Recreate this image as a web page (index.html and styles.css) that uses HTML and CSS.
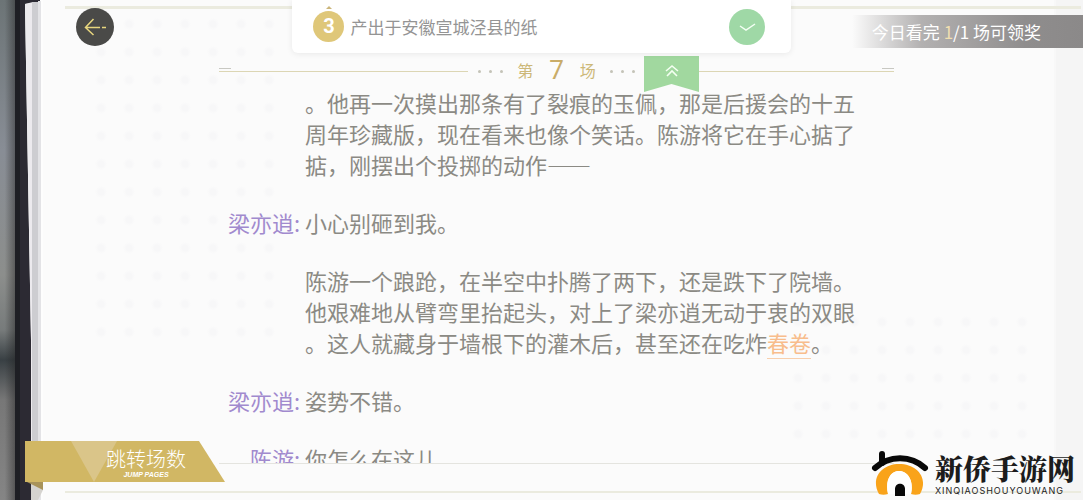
FILE: index.html
```
<!DOCTYPE html>
<html lang="zh-CN">
<head>
    <meta charset="UTF-8">
    <meta name="viewport" content="width=device-width, initial-scale=1.0">
    <title>第 7 场</title>
    <link rel="stylesheet" href="styles.css">
</head>
<body>
    <div class="book">
        <!-- Book cover and page edges -->
        <div class="spine">
            <svg width="100%" height="100%" viewBox="0 0 43 500" preserveAspectRatio="none" aria-hidden="true">
                <defs>
                    <linearGradient id="desk" x1="0" y1="0" x2="0" y2="1">
                        <stop offset="0" stop-color="#6c7476"/>
                        <stop offset="0.3" stop-color="#888d95"/>
                        <stop offset="0.55" stop-color="#8c8e8c"/>
                        <stop offset="0.66" stop-color="#777b7b"/>
                        <stop offset="0.72" stop-color="#394044"/>
                        <stop offset="0.8" stop-color="#777"/>
                        <stop offset="1" stop-color="#858585"/>
                    </linearGradient>
                    <linearGradient id="shade" x1="0" y1="0" x2="1" y2="0">
                        <stop offset="0.3" stop-color="#222" stop-opacity="0"/>
                        <stop offset="1" stop-color="#222" stop-opacity="0.5"/>
                    </linearGradient>
                </defs>
                <rect width="43" height="500" fill="#fdfdfd"/>
                <rect width="16" height="500" fill="url(#desk)"/>
                <rect width="16" height="500" fill="url(#shade)"/>
                <path d="M15 0H40V2L25 4L27 120L31 340V500H15Z" fill="#2c2a33"/>
                <path d="M15 0H20V500H15Z" fill="#1e1f24"/>
                <path d="M25 4L33 2V500H31V340L27 120Z" fill="#eceaee"/>
                <path d="M32 2H38V500H32Z" fill="#cdcdd1"/>
                <path d="M38 1H41V500H38Z" fill="#e3e3e6"/>
                <path d="M31 482H43V490L38 500H31Z" fill="#d5d3cf"/>
                <path d="M27 482H43V490Z" fill="#a8935a"/>
            </svg>
        </div>

        <main class="page">
            <div class="dots dots-left"></div>
            <div class="dots dots-right"></div>

            <section class="reader">
                <header class="scene">
                    <span class="line line-left"></span>
                    <span class="dot-row"><i></i><i></i><i></i></span>
                    <h1><span>第</span><em>7</em><span>场</span></h1>
                    <span class="dot-row"><i></i><i></i><i></i></span>
                    <span class="line line-right"></span>
                    <button class="bookmark" type="button" aria-label="收起">
                        <svg width="18" height="18" viewBox="0 0 18 18"><path d="M3 9L9 4L15 9M4 14L9 9L14 14" fill="none" stroke="#f4fff2" stroke-width="1.6"/></svg>
                    </button>
                </header>

                <div class="script">
                    <div class="entry">
                        <p>。他再一次摸出那条有了裂痕的玉佩，那是后援会的十五<br>周年珍藏版，现在看来也像个笑话。陈游将它在手心掂了<br>掂，刚摆出个投掷的动作——</p>
                    </div>
                    <div class="entry">
                        <span class="name">梁亦逍:</span>
                        <p>小心别砸到我。</p>
                    </div>
                    <div class="entry">
                        <p>陈游一个踉跄，在半空中扑腾了两下，还是跌下了院墙。<br>他艰难地从臂弯里抬起头，对上了梁亦逍无动于衷的双眼<br>。这人就藏身于墙根下的灌木后，甚至还在吃炸<a class="keyword" href="#">春卷</a>。</p>
                    </div>
                    <div class="entry">
                        <span class="name">梁亦逍:</span>
                        <p>姿势不错。</p>
                    </div>
                    <div class="entry">
                        <span class="name">陈游:</span>
                        <p>你怎么在这儿</p>
                    </div>
                </div>
            </section>
        </main>
    </div>

    <button class="back" type="button" aria-label="返回">
        <svg width="38" height="38" viewBox="0 0 38 38"><path d="M17.500 11L9.500 19.500L17.500 27M9.500 19.500H24M26 19.500H30" fill="none" stroke="#e8d67e" stroke-width="1.5"/></svg>
    </button>

    <div class="task">
        <span class="task-number">3</span>
        <span class="task-text">产出于安徽宣城泾县的纸</span>
        <button class="task-check" type="button" aria-label="完成">
            <svg width="36" height="36" viewBox="0 0 36 36"><path d="M11 17L17 21L26 15" fill="none" stroke="#f4fff4" stroke-width="1.5"/></svg>
        </button>
    </div>

    <div class="reward">今日看完 <b>1</b>/1 场可领奖</div>

    <button class="jump" type="button">
        <span class="jump-title">跳转场数</span>
        <span class="jump-sub">JUMP PAGES</span>
    </button>

    <!-- Site watermark -->
    <div class="watermark">
        <svg width="58" height="46" viewBox="0 0 58 46" aria-hidden="true">
            <path d="M8 43C-1 27 11 13 28 13C46 13 58 27 49 43C46 44 43 44 40 43C43 30 37 20 28 20C19 20 14 30 17 43C14 44 11 44 8 43Z" fill="#f9a31a"/>
            <path d="M17 43C14 30 19 20 28 20C37 20 43 30 40 43Z" fill="#fff"/>
            <path d="M24 45V38C24 31 34 31 34 38V45Z" fill="#080808"/>
            <path d="M4 17C18 4 40 4 54 17" fill="none" stroke="#080808" stroke-width="6" stroke-linecap="round"/>
            <path d="M11 3V12" stroke="#080808" stroke-width="6" stroke-linecap="round"/>
        </svg>
        <div class="watermark-text">
            <strong>新侨手游网</strong>
            <small>XINQIAOSHOUYOUWANG</small>
        </div>
    </div>
</body>
</html>
```
FILE: styles.css
```
* {
    box-sizing: border-box;
}

body {
    margin: 0;
    font-family: "Noto Sans CJK SC", "Noto Sans", sans-serif;
    color: #8b8a84;
    background-color: #f5f5f5;
    overflow: hidden;
}

button {
    border: none;
    padding: 0;
    font-family: inherit;
    cursor: pointer;
}

.book {
    display: flex;
    height: 100vh;
    padding-right: 27px;
}

.spine {
    width: 43px;
    flex-shrink: 0;
}

.spine svg {
    display: block;
}

/* Page */
.page {
    position: relative;
    flex: 1;
    display: flex;
    padding: 56px 160px 36px 176px;
    background-color: #fbfbfb;
    border-right: 2px solid #f8f8f8;
}

.page::before,
.page::after {
    content: "";
    position: absolute;
    left: 22px;
    right: -27px;
    height: 3px;
    background-color: #ebebdf;
}

.page::before {
    top: 6px;
}

.page::after {
    bottom: 7px;
    height: 2px;
}

.dots {
    position: absolute;
    background-image: radial-gradient(circle, #f7f7f8 3px, transparent 6px);
    background-size: 28px 28px;
}

.dots-left {
    top: 10px;
    left: 44px;
    width: 196px;
    height: 336px;
}

.dots-right {
    right: 18px;
    bottom: 52px;
    width: 252px;
    height: 140px;
}

.reader {
    position: relative;
    flex: 1;
    display: flex;
    flex-direction: column;
    min-width: 0;
    border-bottom: 1px solid #e4e4df;
}

/* Scene heading */
.scene {
    position: relative;
    display: flex;
    align-items: center;
    gap: 10px;
    height: 30px;
    flex-shrink: 0;
}

.scene h1 {
    display: flex;
    align-items: center;
    gap: 16px;
    margin: 0 4px;
    font-size: 16px;
    font-weight: 400;
    line-height: 26px;
    padding-bottom: 2px;
    color: #cdb878;
}

.scene em {
    font-family: Roboto, sans-serif;
    font-size: 26px;
    font-style: normal;
    color: #c9ac68;
}

.line {
    position: relative;
    flex: 1;
    height: 1px;
    background-color: #dcd6b4;
}

.line::before {
    content: "";
    position: absolute;
    top: -3px;
    width: 12px;
    height: 1px;
    background-color: #c8c8c2;
}

.line-left::before {
    left: 0;
}

.line-right::before {
    right: 0;
}

.dot-row {
    display: flex;
    gap: 8px;
}

.dot-row i {
    width: 3px;
    height: 3px;
    border-radius: 50%;
    background-color: #c4c3b8;
}

.bookmark {
    position: absolute;
    top: 0;
    right: 195px;
    width: 55px;
    height: 36px;
    background-color: #a1d89f;
    clip-path: polygon(0 0, 100% 0, 100% 100%, 50% 78%, 0 100%);
}

.bookmark svg {
    display: block;
    margin: 0 auto 6px;
}

/* Script text */
.script {
    flex: 1;
    display: flex;
    flex-direction: column;
    gap: 27px;
    min-height: 0;
    padding-top: 1px;
    overflow: hidden;
    font-size: 22px;
    line-height: 31px;
}

.entry {
    display: grid;
    grid-template-columns: 81px 1fr;
    column-gap: 5px;
    white-space: nowrap;
}

.entry p {
    grid-column: 2;
    margin: 0;
}

.name {
    text-align: right;
    color: #a18ace;
}

.keyword {
    color: #f8bd8c;
    text-decoration: none;
    border-bottom: 1px solid #f8cfac;
}

/* Overlays */
.back {
    position: absolute;
    top: 8px;
    left: 76px;
    width: 38px;
    height: 38px;
    border-radius: 50%;
    background-color: #4a4a48;
}

.back svg,
.task-check svg {
    display: block;
}

.task {
    position: absolute;
    top: 0;
    left: 27%;
    right: 27%;
    display: flex;
    align-items: center;
    gap: 6px;
    height: 53px;
    padding: 0 26px 0 21px;
    border-radius: 0 0 6px 6px;
    background-color: #fff;
    box-shadow: 0 1px 6px rgba(0, 0, 0, 0.08);
}

.task-number {
    position: relative;
    width: 31px;
    height: 31px;
    border-radius: 50%;
    background-color: #dfc779;
    color: #fff;
    font-family: Roboto, sans-serif;
    font-size: 20px;
    font-weight: 700;
    line-height: 31px;
    text-align: center;
}

.task-number::before {
    content: "";
    position: absolute;
    top: -5px;
    left: 13px;
    border: 3px solid transparent;
    border-top: none;
    border-bottom-color: #cbb57a;
}

.task-text {
    flex: 1;
    font-size: 17px;
    line-height: 24px;
    color: #949494;
}

.task-check {
    width: 36px;
    height: 36px;
    border-radius: 50%;
    background-color: #9fd8a6;
}

.reward {
    position: absolute;
    top: 15px;
    right: 0;
    padding: 0 42px 0 20px;
    font-size: 17px;
    line-height: 33px;
    color: #fff;
    background: linear-gradient(to right, rgba(130, 128, 128, 0), #b3b1b1 30%, #8f8d8d 75%, #8b8989);
}

.reward b {
    font-weight: 400;
    color: #f0dfb0;
}

.jump {
    position: absolute;
    left: 25px;
    bottom: 18px;
    display: flex;
    flex-direction: column;
    align-items: center;
    width: 200px;
    height: 41px;
    padding: 6px 0 0 42px;
    color: #fff;
    background-color: #d1b764;
    clip-path: polygon(0 0, 87% 0, 100% 100%, 0 100%);
}

.jump::before {
    content: "";
    position: absolute;
    top: 0;
    left: 46px;
    width: 46px;
    height: 41px;
    background-color: #dac589;
    clip-path: polygon(0 0, 100% 0, 50% 100%);
}

.jump-title,
.jump-sub {
    position: relative;
}

.jump-title {
    font-size: 20px;
    font-weight: 300;
    line-height: 24px;
}

.jump-sub {
    font-family: "Liberation Sans", sans-serif;
    font-size: 7px;
    font-style: italic;
    font-weight: 700;
    line-height: 8px;
}

.watermark {
    position: absolute;
    right: 8px;
    bottom: 3px;
    display: flex;
    align-items: center;
    gap: 6px;
    color: #1c1c1c;
}

.watermark-text {
    display: flex;
    flex-direction: column;
}

.watermark strong {
    font-family: "Noto Serif CJK SC", "Noto Sans CJK SC", serif;
    font-size: 28px;
    font-weight: 900;
    line-height: 34px;
}

.watermark small {
    font-family: Inter, sans-serif;
    font-size: 9px;
    line-height: 12px;
    letter-spacing: 1px;
}
```
